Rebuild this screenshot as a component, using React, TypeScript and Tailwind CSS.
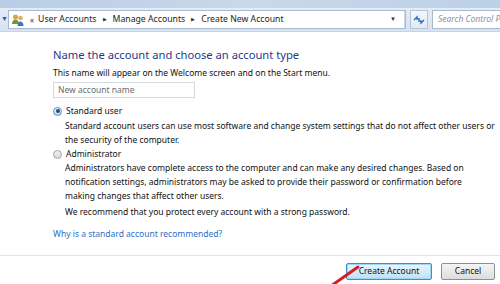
import React from "react";

function UsersIcon() {
  return (
    <svg width="14" height="14" viewBox="0 0 14 14">
      <circle cx="4.5" cy="4" r="2.5" fill="#d9a441" />
      <path d="M1 11c0-3 1.5-4.5 3.5-4.5S8 8 8 11z" fill="#6a9a3a" />
      <circle cx="9.5" cy="5" r="2.3" fill="#e0b060" />
      <path d="M6.5 13c0-3 1.3-4.5 3-4.5s3 1.5 3 4.5z" fill="#3a78c0" />
    </svg>
  );
}

function RefreshIcon() {
  return (
    <svg width="12" height="10" viewBox="0 0 12 10">
      <path d="M1 5 L4 2 L4 4 L7 4" stroke="#2e6fc0" strokeWidth="1.4" fill="none" />
      <path d="M11 5 L8 8 L8 6 L5 6" stroke="#2e6fc0" strokeWidth="1.4" fill="none" />
    </svg>
  );
}

function Chevron() {
  return <span className="text-[5px] text-[#333] mx-[6px]">▶</span>;
}

export default function App() {
  const font = { fontFamily: '"Noto Sans", "Open Sans", sans-serif' };
  return (
    <div className="relative w-[500px] h-[284px] overflow-hidden bg-white text-[#111]" style={font}>
      {/* blurred title strip */}
      <div className="h-[8px] bg-gradient-to-r from-[#b8cde4] via-[#c9d8ea] to-[#bcd0e6]" />
      {/* address bar */}
      <div className="h-[24px] bg-gradient-to-b from-[#e4edf7] to-[#d5e2f1] flex items-center pl-[1px] border-b border-[#c7d4e4]">
        <span className="text-[7px] text-[#2c5f9e] w-[7px] shrink-0">▼</span>
        <div className="flex items-center h-[19px] w-[398px] shrink-0 bg-white border border-[#a9b8cc] pl-[2px]">
          <UsersIcon />
          <span className="text-[8px] text-[#333] ml-[5px] mr-[4px]">«</span>
          <span className="text-[8.7px] text-[#1e1e1e]">User Accounts</span>
          <Chevron />
          <span className="text-[8.7px] text-[#1e1e1e]">Manage Accounts</span>
          <Chevron />
          <span className="text-[8.7px] text-[#1e1e1e]">Create New Account</span>
          <div className="flex-1" />
          <span className="text-[6px] text-[#333] mr-[8px]">▼</span>
          <div className="w-[1px] h-[17px] bg-[#d0d8e2]" />
        </div>
        <div className="w-[18px] h-[19px] shrink-0 ml-[4px] flex items-center justify-center border border-[#b5c4d6] bg-gradient-to-b from-[#f4f8fc] to-[#e2eaf4]">
          <RefreshIcon />
        </div>
        <div className="flex items-center h-[19px] w-[80px] shrink-0 ml-[4px] bg-white border border-[#a9b8cc] pl-[5px] overflow-hidden">
          <span className="text-[8.5px] italic text-[#8a93a0] whitespace-nowrap">Search Control Panel</span>
        </div>
      </div>

      {/* content */}
      <div className="pl-[53px] pt-[15px] h-[223px]">
        <div className="text-[11.2px] text-[#1e3a8c] leading-[16px]">Name the account and choose an account type</div>
        <div className="text-[8.5px] leading-[13px] mt-[3px]">This name will appear on the Welcome screen and on the Start menu.</div>
        <div className="mt-[3px] w-[142px] h-[16px] border border-[#d3d9e0] flex items-center pl-[4px]">
          <span className="text-[8.5px] text-[#6b6b6b]">New account name</span>
        </div>

        <div className="flex items-center mt-[6px] h-[14px]">
          <span className="w-[9px] h-[9px] rounded-full border border-[#6d8cb0] bg-gradient-to-b from-[#e8f0fa] to-[#c5d6ea] flex items-center justify-center">
            <span className="w-[4px] h-[4px] rounded-full bg-[#1f4f8f]" />
          </span>
          <span className="text-[8.5px] ml-[4px]">Standard user</span>
        </div>
        <div className="pl-[12px] text-[8.5px] leading-[14px] mt-[1px] whitespace-nowrap">
          <div>Standard account users can use most software and change system settings that do not affect other users or</div>
          <div>the security of the computer.</div>
        </div>

        <div className="flex items-center mt-0 h-[14px]">
          <span className="w-[9px] h-[9px] rounded-full border border-[#9aa4ae] bg-gradient-to-b from-[#f0f0f0] to-[#d6d9dc]" />
          <span className="text-[8.5px] ml-[4px]">Administrator</span>
        </div>
        <div className="pl-[12px] text-[8.5px] leading-[14px] whitespace-nowrap">
          <div>Administrators have complete access to the computer and can make any desired changes. Based on</div>
          <div>notification settings, administrators may be asked to provide their password or confirmation before</div>
          <div>making changes that affect other users.</div>
          <div className="mt-[2px]">We recommend that you protect every account with a strong password.</div>
        </div>

        <div className="text-[8.5px] leading-[14px] text-[#2f6fc2] mt-[8px]">Why is a standard account recommended?</div>
      </div>

      {/* footer */}
      <div className="border-t border-[#e3e3e3] h-[29px] flex items-start justify-end pt-[7px] pr-[5px] gap-[9px]">
        <div className="w-[86px] h-[17px] border border-[#3c8fd0] rounded-[2px] bg-gradient-to-b from-[#eaf6fd] to-[#bfe0f5] flex items-center justify-center shadow-[inset_0_0_0_1px_#9fd6f7]">
          <span className="text-[8.5px]">Create Account</span>
        </div>
        <div className="w-[54px] h-[17px] border border-[#8e8f8f] rounded-[2px] bg-gradient-to-b from-[#f5f5f5] to-[#dcdcdc] flex items-center justify-center">
          <span className="text-[8.5px]">Cancel</span>
        </div>
      </div>

      {/* red annotation arrow */}
      <svg className="absolute left-0 top-0 pointer-events-none" width="500" height="284">
        <path d="M331 286 L358 267" stroke="#d21f26" strokeWidth="3" strokeLinecap="round" />
      </svg>
    </div>
  );
}
